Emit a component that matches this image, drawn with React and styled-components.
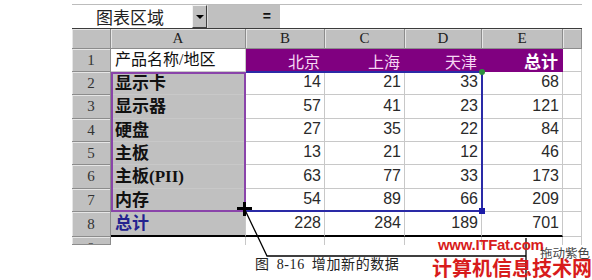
import React from 'react';
import styled, { createGlobalStyle } from 'styled-components';

const GlobalStyle = createGlobalStyle`
  html, body {
    margin: 0;
    padding: 0;
    background: #fff;
  }
`;

const CJK = '"Noto Sans CJK SC", sans-serif';
const SERIF = '"Liberation Serif", "Noto Sans CJK SC", serif';
const SANS = '"Liberation Sans", "Noto Sans CJK SC", sans-serif';

const COLS = [39, 135, 79, 80, 77, 81, 19];
const ROWS = [20, 23, 23, 24, 23, 23, 24, 23, 25, 8];

const Page = styled.div`
  position: relative;
  width: 592px;
  height: 280px;
  overflow: hidden;
  background: #fff;
`;

const Sheet = styled.div`
  margin: 4px 0 0 72px;
  width: 510px;
  border-top: 1px solid #bcbcbc;
`;

const FormulaBar = styled.div`
  display: flex;
  height: 23px;
`;

const NameBox = styled.div`
  width: 120px;
  padding-left: 24px;
  box-sizing: border-box;
  font: 17px/23px ${CJK};
  color: #222;
`;

const DropButton = styled.div`
  width: 15px;
  display: flex;
  align-items: center;
  justify-content: center;
  box-sizing: border-box;
  background: #c0c0c0;
  border-top: 1px solid #f2f2f2;
  border-left: 1px solid #f2f2f2;
  border-right: 1px solid #404040;
  border-bottom: 1px solid #404040;
  &::after {
    content: '';
    border-left: 4px solid transparent;
    border-right: 4px solid transparent;
    border-top: 4px solid #000;
  }
`;

const EqualsBox = styled.div`
  width: 73px;
  box-sizing: border-box;
  padding-right: 9px;
  text-align: right;
  background: #c0c0c0;
  border-left: 1px solid #dcdcdc;
  font: bold 14px/23px ${SANS};
  color: #111;
`;

const FormulaInput = styled.div`
  flex: 1;
  background: #fff;
`;

const Grid = styled.div`
  display: grid;
  grid-template-columns: ${COLS.map((c) => c + 'px').join(' ')};
  grid-template-rows: ${ROWS.map((r) => r + 'px').join(' ')};
  border-top: 1px solid #3c3c3c;
`;

const Cell = styled.div`
  grid-row: ${(p) => p.$r};
  grid-column: ${(p) => p.$c};
  display: flex;
  align-items: center;
  box-sizing: border-box;
  overflow: hidden;
  white-space: nowrap;
  border-right: 1px solid #c8c8c8;
  border-bottom: ${(p) => (p.$total ? '2px solid #000' : p.$last ? 'none' : '1px solid #c8c8c8')};
  background: #fff;
`;

const HeadCell = styled(Cell)`
  justify-content: center;
  background: #c0c0c0;
  border-right: 1px solid #8c8c8c;
  border-bottom: 1px solid #8c8c8c;
  box-shadow: inset 1px 1px 0 #e6e6e6;
  font: 15px/1 ${SERIF};
  color: #222;
`;

const RowHead = styled(HeadCell)`
  align-items: ${(p) => (p.$cut ? 'flex-start' : 'center')};
  padding-top: ${(p) => (p.$cut ? '4px' : '0')};
  color: #333;
`;

const LabelCell = styled(Cell)`
  padding-left: 4px;
  background: ${(p) => (p.$plain ? '#fff' : '#c0c0c0')};
  font: ${(p) => (p.$plain ? '16px' : 'bold 17px')} / 1 ${SERIF};
  color: ${(p) => p.$color || '#111'};
`;

const NumCell = styled(Cell)`
  justify-content: flex-end;
  padding: 0 3px 2px 0;
  font: 16px/1 ${SANS};
  color: #2a2a2a;
`;

const TitleCell = styled(Cell)`
  justify-content: flex-end;
  padding-right: 4px;
  background: #800080;
  border-right-color: #800080;
  border-bottom: none;
  font: ${(p) => (p.$strong ? 'bold 17px' : '16px')} / 1 ${CJK};
  color: ${(p) => (p.$strong ? '#fff' : '#f6d6f4')};
`;

const Range = styled.div`
  grid-row: ${(p) => p.$r};
  grid-column: ${(p) => p.$c};
  position: relative;
  z-index: 2;
  pointer-events: none;
  box-sizing: border-box;
  border: 2px solid ${(p) => p.$color};
  ${(p) => (p.$open ? 'border-left: none;' : '')}
  margin: ${(p) => p.$margin || '0'};
`;

const Handle = styled.span`
  position: absolute;
  right: -4px;
  width: 6px;
  height: 6px;
  background: ${(p) => p.$color};
  border-radius: ${(p) => (p.$round ? '50%' : '0')};
  ${(p) => (p.$top ? 'top: -4px;' : 'bottom: -4px;')}
`;

const CaptionRow = styled.div`
  display: flex;
  height: 35px;
  padding-left: 255px;
`;

const CaptionText = styled.div`
  margin-top: 12px;
  font: 14px/15px ${SERIF};
  color: #222;
  letter-spacing: 0.6px;
  word-spacing: 3px;
`;

const Note = styled.div`
  margin-left: auto;
  margin-right: 2px;
  font: 12.5px/15px ${CJK};
  color: #444;
`;

const Annotations = styled.svg`
  position: absolute;
  left: 0;
  top: 0;
  pointer-events: none;
  z-index: 3;
`;

const Watermark = styled.div`
  position: absolute;
  left: 432px;
  top: 237px;
  z-index: 4;
  color: #d81c1c;
`;

const WatermarkUrl = styled.div`
  padding-left: 6px;
  font: bold 15px/15px ${SANS};
  letter-spacing: -0.3px;
`;

const WatermarkName = styled.div`
  margin-top: 5px;
  font: bold 20px/22px ${CJK};
`;

const regions = ['北京', '上海', '天津'];
const rows = [
  ['显示卡', 14, 21, 33, 68],
  ['显示器', 57, 41, 23, 121],
  ['硬盘', 27, 35, 22, 84],
  ['主板', 13, 21, 12, 46],
  ['主板(PII)', 63, 77, 33, 173],
  ['内存', 54, 89, 66, 209],
];
const totals = [228, 284, 189, 701];

export default function App() {
  return (
    <Page>
      <GlobalStyle />
      <Sheet>
        <FormulaBar>
          <NameBox>图表区域</NameBox>
          <DropButton />
          <EqualsBox>=</EqualsBox>
          <FormulaInput />
        </FormulaBar>

        <Grid>
          <HeadCell $r={1} $c={1} />
          {['A', 'B', 'C', 'D', 'E', ''].map((l, i) => (
            <HeadCell key={i} $r={1} $c={i + 2}>{l}</HeadCell>
          ))}

          {/* row 1: titles */}
          <RowHead $r={2} $c={1}>1</RowHead>
          <LabelCell $r={2} $c={2} $plain>产品名称/地区</LabelCell>
          {regions.map((t, i) => (
            <TitleCell key={t} $r={2} $c={i + 3}>{t}</TitleCell>
          ))}
          <TitleCell $r={2} $c={6} $strong>总计</TitleCell>
          <Cell $r={2} $c={7} />

          {rows.map((row, ri) => {
            const r = ri + 3;
            return (
              <React.Fragment key={row[0]}>
                <RowHead $r={r} $c={1}>{ri + 2}</RowHead>
                <LabelCell $r={r} $c={2}>{row[0]}</LabelCell>
                {row.slice(1).map((n, ci) => (
                  <NumCell key={ci} $r={r} $c={ci + 3}>{n}</NumCell>
                ))}
                <Cell $r={r} $c={7} />
              </React.Fragment>
            );
          })}

          {/* row 8: totals */}
          <RowHead $r={9} $c={1}>8</RowHead>
          <LabelCell $r={9} $c={2} $color="#23238f" $total>总计</LabelCell>
          {totals.map((n, ci) => (
            <NumCell key={ci} $r={9} $c={ci + 3} $total>{n}</NumCell>
          ))}
          <Cell $r={9} $c={7} />

          {/* row 9: cut off by the screenshot edge */}
          <RowHead $r={10} $c={1} $cut>9</RowHead>
          {[2, 3, 4, 5, 6, 7].map((c) => (
            <Cell key={c} $r={10} $c={c} $last />
          ))}

          <Range $r="3 / 9" $c="2 / 3" $color="#8a44aa" />
          <Range $r="3 / 9" $c="3 / 6" $color="#2a2aa6" $open $margin="-1px -1px 0 0">
            <Handle $top $round $color="#2f8f3f" />
            <Handle $color="#1c1ca8" />
          </Range>
        </Grid>
      </Sheet>

      <CaptionRow>
        <CaptionText>图 8-16 增加新的数据</CaptionText>
        <Note>拖动紫色</Note>
      </CaptionRow>

      <Annotations width="592" height="280" viewBox="0 0 592 280">
        <rect x="237" y="207" width="15" height="3" fill="#000" />
        <rect x="243" y="202" width="3" height="14" fill="#000" />
        <polyline points="245,210 267,256 526,256" fill="none" stroke="#000" strokeWidth="1.3" />
        <line x1="526" y1="238" x2="526" y2="280" stroke="#000" strokeWidth="1.3" />
      </Annotations>

      <Watermark>
        <WatermarkUrl>www.ITFat.com</WatermarkUrl>
        <WatermarkName>计算机信息技术网</WatermarkName>
      </Watermark>
    </Page>
  );
}
